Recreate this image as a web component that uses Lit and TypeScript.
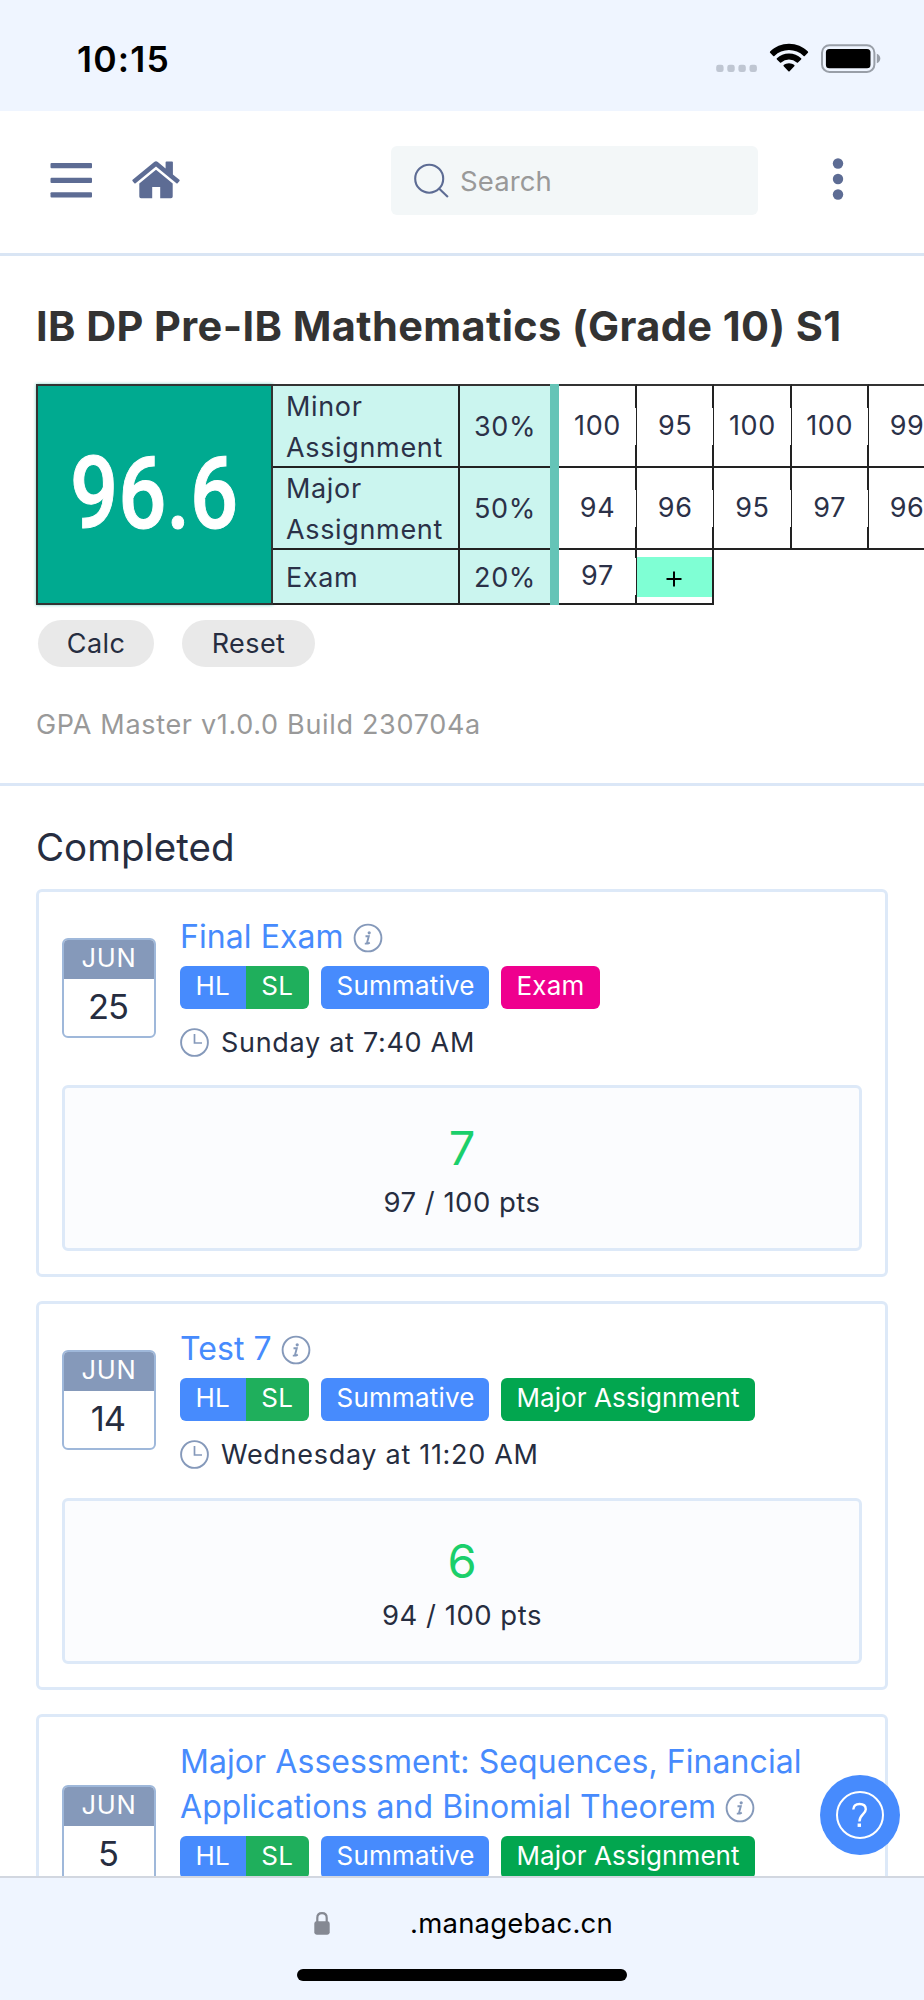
import { LitElement, html, css, svg, nothing } from "lit";
import { customElement, property } from "lit/decorators.js";

interface Task {
  month: string;
  day: string;
  title: string;
  kind: string;
  kindClass: string;
  due?: string;
  grade?: string;
  points?: string;
}

const TASKS: Task[] = [
  { month: "JUN", day: "25", title: "Final Exam", kind: "Exam", kindClass: "exam", due: "Sunday at 7:40 AM", grade: "7", points: "97 / 100 pts" },
  { month: "JUN", day: "14", title: "Test 7", kind: "Major Assignment", kindClass: "major", due: "Wednesday at 11:20 AM", grade: "6", points: "94 / 100 pts" },
  { month: "JUN", day: "5", title: "Major Assessment: Sequences, Financial Applications and Binomial Theorem", kind: "Major Assignment", kindClass: "major" },
];

@customElement("status-bar")
class StatusBar extends LitElement {
  static styles = css`
    :host { display: flex; height: 111px; background: #eff5ff; color: #000; box-sizing: border-box; padding: 37px 43px 0 77px; justify-content: space-between; align-items: flex-start; }
    .time { font-size: 35.5px; line-height: 46px; font-weight: 600; letter-spacing: 1.2px; }
    svg { display: block; margin-top: 6px; }
  `;
  render() {
    return html`<span class="time">10:15</span>
      <svg width="167" height="31" viewBox="0 0 167 31">
        <g fill="#bfc6d2">${[0, 11.1, 22.2, 33.3].map((x) => svg`<rect x=${2.2 + x} y="21.7" width="7.4" height="7.4" rx="2.4"/>`)}</g>
        <g transform="translate(56 0.5)">
          <path d="M19 0.3C26.3 0.3 33 3.1 37.9 8.1Q38.4 8.7 37.9 9.3L34.8 12.4Q34.2 12.9 33.6 12.4A21.2 21.2 0 0 0 4.4 12.4Q3.8 12.9 3.2 12.4L.1 9.3Q-.4 8.7 .1 8.1C5 3.1 11.7 .3 19 .3Z"/>
          <path d="M19 9.9C23.7 9.9 27.9 11.7 31.1 14.7Q31.7 15.3 31.1 15.9L28 19Q27.4 19.5 26.8 19A11.6 11.6 0 0 0 11.2 19Q10.6 19.5 10 19L6.9 15.9Q6.3 15.3 6.9 14.7C10.1 11.7 14.3 9.9 19 9.9Z"/>
          <path d="M19 19.7C21 19.7 22.9 20.4 24.3 21.6Q24.9 22.2 24.3 22.8L19.6 27.7Q19 28.3 18.4 27.7L13.7 22.8Q13.1 22.2 13.7 21.6C15.1 20.4 17 19.7 19 19.7Z"/>
        </g>
        <rect x="108" y="2.2" width="52.4" height="26.8" rx="7.5" fill="none" stroke="#999fa8" stroke-width="2"/>
        <rect x="111.9" y="6" width="44.6" height="19.2" rx="3.5"/>
        <path d="M162.8 10.8Q166.3 12.2 166.3 15.5T162.8 20.2Z" fill="#999fa8"/>
      </svg>`;
  }
}

@customElement("top-nav")
class TopNav extends LitElement {
  static styles = css`
    :host { display: flex; height: 145px; box-sizing: border-box; background: #fff; border-bottom: 3px solid #d9e5f4; padding: 35px 81px 0 50px; align-items: flex-start; color: #5d6c94; }
    svg { display: block; flex: none; }
    .menu { margin-top: 17px; }
    .home { margin: 14px 0 0 40px; }
    .search { display: flex; align-items: center; box-sizing: border-box; width: 367px; height: 69px; margin-left: 211px; padding: 0 0 0 23px; gap: 10px; border-radius: 6px; background: #f3f7f8; color: #999; font-size: 27.5px; letter-spacing: 0.1px; flex: none; }
    .more { margin: 12px 0 0 74px; }
  `;
  render() {
    return html`
      <svg class="menu" width="42" height="36" viewBox="0 0 42 36" fill="currentColor"><rect x=".5" y="0" width="41.5" height="5.2" rx="1"/><rect x=".5" y="14.7" width="41.5" height="5.2" rx="1"/><rect x=".5" y="29.3" width="41.5" height="5.2" rx="1"/></svg>
      <svg class="home" width="48" height="40" viewBox="0 0 48 40" fill="currentColor">
        <path d="M.6 19.7 22.2 2Q24 .6 25.8 2L33.6 8.4V2.3Q33.6 1.4 34.5 1.4H40Q40.9 1.4 40.9 2.3V14.4L47.4 19.7Q48 20.3 47.5 20.9L45.6 23.2Q45 23.7 44.4 23.2L24 6.5 3.6 23.2Q3 23.7 2.4 23.2L.5 20.9Q0 20.3 .6 19.7Z"/>
        <path d="M24 9.8 40.7 23.5V36.5Q40.7 38.2 39 38.2H28.2V26.9H20.2V38.2H9Q7.3 38.2 7.3 36.5V23.5Z"/>
      </svg>
      <div class="search">
        <svg width="36" height="36" viewBox="0 0 36 36" fill="none" stroke="#5d6c94" stroke-width="2.1"><circle cx="15.2" cy="15.7" r="14"/><path d="m25 25.5 8.9 8.6"/></svg>
        <span>Search</span>
      </div>
      <svg class="more" width="12" height="43" viewBox="0 0 12 43" fill="currentColor"><circle cx="6" cy="5.5" r="5.2"/><circle cx="6" cy="21" r="5.2"/><circle cx="6" cy="36.5" r="5.2"/></svg>`;
  }
}

@customElement("grade-table")
class GradeTable extends LitElement {
  static styles = css`
    :host { display: flex; width: 888px; height: 221px; overflow: hidden; color: #2b3148; font-size: 27px; letter-spacing: 0.65px; padding: 3px; margin: -3px; }
    .total { flex: none; box-sizing: border-box; width: 237px; border: 2px solid #333; background: #00aa90; color: #fff; display: flex; align-items: center; justify-content: center; box-shadow: 0 0 3px #00aa9088; }
    .score { font-family: Roboto, sans-serif; font-weight: 500; font-size: 101px; line-height: 110px; letter-spacing: 0; transform: scaleX(0.84); margin: -1px 0 0 0; -webkit-text-stroke: 1px #fff; }
    .rows { flex: none; display: grid; grid-template-rows: 84px 82px 55px; }
    .row { display: flex; }
    .name, .pct, .cell { box-sizing: border-box; display: flex; align-items: center; border-bottom: 2px solid #222; }
    .row:first-child > div { border-top: 2px solid #333; }
    .row:first-child > .bar { border: 0; }
    .name { width: 187px; padding: 3px 0 0 13px; background: #cbf5ef; border-right: 2px solid #222; line-height: 40.5px; }
    .pct { width: 90px; background: #cbf5ef; justify-content: center; padding-top: 1px; }
    .bar { width: 9px; background: #65c4b7; }
    .cell { width: 77.3px; border-right: 2px solid #222; background: #fff; }
    .cell:nth-child(4) { width: 78px; }
    .mark { flex: none; width: calc(100% + 1px); height: 37px; line-height: 36px; text-align: center; background: #fff; }
    .cell.add { padding: 7px 0 6px; align-items: stretch; }
    .plus { flex: 1; display: flex; align-items: center; justify-content: center; padding: 4px 2px 0 0; background: #7fffd4; color: #000; }
  `;
  render() {
    const rows = [
      { name: html`Minor<br />Assignment`, pct: "30%", marks: [100, 95, 100, 100, 99] },
      { name: html`Major<br />Assignment`, pct: "50%", marks: [94, 96, 95, 97, 96] },
      { name: html`Exam`, pct: "20%", marks: [97], add: true },
    ];
    return html`<div class="total"><span class="score">96.6</span></div>
      <div class="rows">
        ${rows.map((r) => html`<div class="row">
          <div class="name"><span>${r.name}</span></div>
          <div class="pct">${r.pct}</div>
          <div class="bar"></div>
          ${r.marks.map((m) => html`<div class="cell"><span class="mark">${m}</span></div>`)}
          ${r.add ? html`<div class="cell add"><span class="plus"><svg width="16" height="16" viewBox="0 0 16 16" stroke="#000" stroke-width="2"><path d="M8 .5v15M.5 8h15"/></svg></span></div>` : ""}
        </div>`)}
      </div>`;
  }
}

@customElement("task-card")
class TaskCard extends LitElement {
  @property({ attribute: false }) task!: Task;
  static styles = css`
    :host { display: block; box-sizing: border-box; width: 852px; min-height: 387px; border: 3px solid #dde9f8; border-radius: 6px; padding: 22px 23px 23px; background: #fff; color: #262d40; }
    .head { display: flex; align-items: center; gap: 24px; }
    .date { flex: none; box-sizing: border-box; width: 94px; height: 100px; border: 2px solid #9fb8da; border-radius: 6px; overflow: hidden; text-align: center; }
    .month { margin: -2px -2px 0; height: 41px; line-height: 39px; background: #8599ba; color: #fff; font-size: 25.5px; letter-spacing: 0.7px; }
    .day { font-size: 34.5px; line-height: 55px; letter-spacing: -1px; margin-left: -2px; }
    .title { font-size: 32px; line-height: 45.5px; letter-spacing: 0.07px; color: #478bfd; }
    .info { display: inline-block; vertical-align: -5px; margin-left: 0; }
    .tags { display: flex; gap: 11.5px; height: 43.5px; margin-top: 6px; color: #fff; font-size: 26px; line-height: 39px; letter-spacing: 0.2px; }
    .tag { box-sizing: border-box; padding: 0 16px; border-radius: 6px; white-space: nowrap; }
    .pair { display: flex; border-radius: 6px; overflow: hidden; }
    .hl { box-sizing: border-box; background: #478bfd; width: 65.5px; text-align: center; }
    .sl { box-sizing: border-box; background: #1faf5c; width: 63.5px; text-align: center; }
    .summative { background: #478bfd; width: 168.5px; }
    .exam { background: #ef008e; width: 99px; }
    .major { background: #02a64f; width: 254.5px; letter-spacing: 0.08px; }
    .due { display: flex; align-items: center; gap: 12px; height: 40px; margin-top: 13px; font-size: 27px; letter-spacing: 0.7px; }
    .result { box-sizing: border-box; height: 166px; margin-top: 23.3px; border: 3px solid #dde9f8; border-radius: 6px; background: #fbfcfe; text-align: center; padding-top: 31px; }
    .grade { font-size: 47px; line-height: 58px; color: #1bcf6b; }
    .points { font-size: 27.5px; line-height: 44px; margin-top: 3px; letter-spacing: 0.5px; }
  `;
  render() {
    const t = this.task;
    return html`<div class="head">
        <div class="date"><div class="month">${t.month}</div><div class="day">${t.day}</div></div>
        <div>
          <div class="title">${t.title} <svg class="info" width="30" height="30" viewBox="0 0 30 30"><circle cx="15" cy="15" r="13.4" fill="none" stroke="#8599ba" stroke-width="1.9"/><circle cx="16.2" cy="9.8" r="1.6" fill="#8599ba"/><path d="M12.5 13.3h3.3l-1.7 6.2q-.2 1.2 .8 1.1l1.9-1M11.8 20.6h2.5" fill="none" stroke="#8599ba" stroke-width="1.9"/></svg></div>
          <div class="tags"><span class="pair"><span class="hl">HL</span><span class="sl">SL</span></span><span class="tag summative">Summative</span><span class="tag ${t.kindClass}">${t.kind}</span></div>
          <div class="due">${t.due ? html`<svg width="29" height="29" viewBox="0 0 29 29" fill="none" stroke="#8599ba"><circle cx="14.5" cy="14.5" r="13.4" stroke-width="1.9"/><path d="M14.5 6v9H22" stroke-width="1.7"/></svg><span>${t.due}</span>` : nothing}</div>
        </div>
      </div>
      ${t.grade ? html`<div class="result"><div class="grade">${t.grade}</div><div class="points">${t.points}</div></div>` : nothing}`;
  }
}

@customElement("app-root")
class AppRoot extends LitElement {
  static styles = css`
    :host { display: flex; flex-direction: column; position: relative; width: 924px; height: 2000px; overflow: hidden; background: #fff; font-family: Inter, "Liberation Sans", sans-serif; }
    main { flex: 1; min-height: 0; overflow: hidden; }
    .course { box-sizing: border-box; height: 530px; padding: 43px 0 0 36px; border-bottom: 3px solid #dbe7f7; }
    h1 { margin: 0; font-size: 41.5px; line-height: 54px; font-weight: 700; letter-spacing: 0.4px; color: #333; white-space: nowrap; }
    grade-table { margin-top: 28px; }
    .actions { display: flex; gap: 28px; padding: 15px 0 0 2px; }
    .btn { box-sizing: border-box; height: 47px; border: 0; border-radius: 24px; background: #e9e9e9; color: #262d40; font: 27px/48px Inter, sans-serif; letter-spacing: 0.4px; padding: 0; width: 116px; }
    .wide { width: 133px; }
    .version { margin-top: 39px; font-size: 27px; line-height: 37px; letter-spacing: 0.68px; color: #999; }
    .done { padding: 35px 36px 0; }
    h2 { margin: 0 0 16px; font-size: 38.5px; line-height: 52px; font-weight: 400; color: #262d40; letter-spacing: 0; }
    .list { display: flex; flex-direction: column; gap: 24px; }
    footer { flex: none; box-sizing: border-box; height: 124px; border-top: 2px solid #d2d7e0; background: #eff5ff; display: flex; flex-direction: column; align-items: center; }
    .address { display: flex; align-items: center; gap: 80px; margin-top: 25px; height: 40px; font-size: 27.5px; letter-spacing: 0.2px; color: #000; padding-left: 3px; }
    .handle { width: 330px; height: 12px; border-radius: 6px; background: #000; margin-top: 26px; }
    .help { position: absolute; left: 820px; top: 1775px; }
  `;
  render() {
    return html`<status-bar></status-bar><top-nav></top-nav>
      <main>
        <section class="course">
          <h1>IB DP Pre-IB Mathematics (Grade 10) S1</h1>
          <grade-table></grade-table>
          <div class="actions"><button class="btn">Calc</button><button class="btn wide">Reset</button></div>
          <div class="version">GPA Master v1.0.0 Build 230704a</div>
        </section>
        <section class="done"><h2>Completed</h2>
          <div class="list">${TASKS.map((t) => html`<task-card .task=${t}></task-card>`)}</div>
        </section>
      </main>
      <footer>
        <div class="address"><svg width="16" height="23" viewBox="0 0 16 23"><path d="M3.3 10V6Q3.3 1.2 8 1.2T12.7 6V10" fill="none" stroke="#858993" stroke-width="2.2"/><rect x=".3" y="9.3" width="15.4" height="13.4" rx="2.4" fill="#858993"/></svg><span>.managebac.cn</span></div>
        <div class="handle"></div>
      </footer>
      <svg class="help" width="80" height="80" viewBox="0 0 80 80"><circle cx="40" cy="40" r="40" fill="#478bfd"/><g fill="none" stroke="#fff" stroke-width="2"><circle cx="40" cy="40" r="23"/><path d="M33.3 34.5Q33.6 29 39.6 29T45.8 34.2C45.8 39 39.4 39.5 39.4 46.5" stroke-width="2.4"/></g><rect x="37.6" y="48.5" width="3.4" height="3.4" fill="#fff"/></svg>`;
  }
}
